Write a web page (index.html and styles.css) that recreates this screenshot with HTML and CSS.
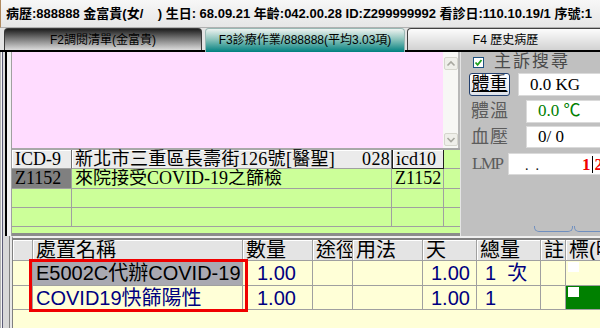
FILE: index.html
```html
<!DOCTYPE html>
<html>
<head>
<meta charset="utf-8">
<link rel="stylesheet" href="styles.css">
</head>
<body>
<div class="app">
  <div class="topbar">病歷:888888 金富貴(女/&nbsp;&nbsp;&nbsp;&nbsp;) 生日: 68.09.21 年齡:042.00.28 ID:Z299999992 看診日:110.10.19/1 序號:1</div>
  <div class="tabs">
    <div class="tab tab-f2">F2調閱清單(金富貴)</div>
    <div class="tab tab-f3">F3診療作業/888888(平均3.03項)</div>
    <div class="tab tab-f4">F4 歷史病歷</div>
  </div>
  <div class="upper">
    <div class="strip"></div>
    <div class="center">
      <div class="memo">
        <div class="memo-text"></div>
        <div class="vscroll">
          <div class="sbtn"><svg width="12" height="11" viewBox="0 0 12 11"><polyline points="2.5,7.5 6,4 9.5,7.5" fill="none" stroke="#a8a8a0" stroke-width="1.6"/></svg></div>
          <div class="sbtn"><svg width="12" height="11" viewBox="0 0 12 11"><polyline points="2.5,4 6,7.5 9.5,4" fill="none" stroke="#a8a8a0" stroke-width="1.6"/></svg></div>
        </div>
      </div>
      <div class="sep"></div>
      <div class="icd">
        <div class="c hd">ICD-9</div>
        <div class="c hd addr"><span class="addr-text">新北市三重區長壽街126號[醫聖]</span><span>028</span></div>
        <div class="c hd focus">icd10</div>
        <div class="c"></div>

        <div class="c code-sel">Z1152</div>
        <div class="c">來院接受COVID-19之篩檢</div>
        <div class="c">Z1152</div>
        <div class="c"></div>

        <div class="c"></div><div class="c"></div><div class="c"></div><div class="c"></div>
        <div class="c"></div><div class="c"></div><div class="c"></div><div class="c"></div>
      </div>
    </div>
    <div class="panel">
      <div class="chk-row">
        <span class="chk"><svg width="11" height="11" viewBox="0 0 11 11"><rect x="0.5" y="0.5" width="10" height="10" fill="#fff" stroke="#1c5180"/><path d="M2.5 5.5 L4.6 7.8 L8.5 3" fill="none" stroke="#21a121" stroke-width="1.8"/></svg></span>
        <span class="chk-label">主訴搜尋</span>
      </div>
      <div class="frow r-weight"><div class="btn"><u>體重</u></div><div class="inp">0.0 KG</div></div>
      <div class="frow r-temp"><span class="lbl">體溫</span><div class="inp green">0.0 ℃</div></div>
      <div class="frow r-bp"><span class="lbl">血壓</span><div class="inp">0/ 0</div></div>
      <div class="frow r-lmp"><span class="lbl lmp">LMP</span><div class="inp inp-lmp"><span class="dots">.&nbsp;&nbsp;.</span><span class="red">1<span class="caret"></span>2</span></div></div>
      <div class="pills"><span class="pill"></span><span class="pill wide"></span></div>
    </div>
  </div>
  <div class="lower">
    <div class="strip strip-low"></div>
    <div class="orders">
      <div class="grid">
        <div class="g gh"></div>
        <div class="g gh">處置名稱</div>
        <div class="g gh">數量</div>
        <div class="g gh">途徑</div>
        <div class="g gh">用法</div>
        <div class="g gh">天</div>
        <div class="g gh">總量</div>
        <div class="g gh">註</div>
        <div class="g gh">標(明</div>

        <div class="g r1"></div>
        <div class="g r1 name sel">E5002C代辦COVID-19:</div>
        <div class="g r1 num qty">1.00</div>
        <div class="g r1"></div>
        <div class="g r1"></div>
        <div class="g r1 num days">1.00</div>
        <div class="g r1 num tot">1&nbsp;&nbsp;次</div>
        <div class="g r1"></div>
        <div class="g r1 mark"><span class="sq"></span></div>

        <div class="g r2"></div>
        <div class="g r2 name">COVID19快篩陽性</div>
        <div class="g r2 num qty">1.00</div>
        <div class="g r2"></div>
        <div class="g r2"></div>
        <div class="g r2 num days">1.00</div>
        <div class="g r2 num tot">1</div>
        <div class="g r2"></div>
        <div class="g r2 mark on"><span class="sq"></span></div>
      </div>
    </div>
    <div class="highlight"></div>
  </div>
</div>
</body>
</html>
```

FILE: styles.css
```css
* { box-sizing: border-box; margin: 0; padding: 0; }
html, body { width: 600px; height: 328px; overflow: hidden; }
body {
  background: #d4d0c8;
  font-family: "Liberation Sans", "Noto Sans CJK TC", sans-serif;
  color: #000;
}
.app { width: 600px; height: 328px; display: flex; flex-direction: column; }

/* top info bar */
.topbar {
  height: 28px;
  flex: none;
  background: linear-gradient(#f7f7f7, #e6e6e6);
  border-bottom: 1px solid #b0b0b0;
  border-left: 1px solid #b08a60;
  padding-left: 5px;
  font-weight: bold;
  font-size: 13px;
  line-height: 28px;
  white-space: nowrap;
  overflow: hidden;
}

/* tabs */
.tabs {
  height: 24px;
  flex: none;
  display: flex;
  align-items: flex-end;
  background: #e4e4e4;
  border-bottom: 2px solid #000;
}
.tab {
  height: 22px;
  flex: none;
  font-size: 12px;
  line-height: 22px;
  text-align: center;
  white-space: nowrap;
  border-radius: 4px 4px 0 0;
}
.tab-f2 {
  margin-left: 4px;
  width: 198px;
  border: 1px solid #3a3a3a;
  border-bottom: none;
  background: linear-gradient(#1e1e1e, #777 45%, #dcdcdc);
}
.tab-f3 {
  margin-left: 3px;
  width: 200px;
  height: 24px;
  margin-bottom: -2px;
  line-height: 22px;
  border: 1px solid #9ab8b4;
  border-bottom: none;
  background: linear-gradient(#eef2f0, #8cc4bc 45%, #008080);
}
.tab-f4 {
  margin-left: 2px;
  width: 197px;
  border: 1px solid #404040;
  border-bottom: none;
  background: linear-gradient(#fcfcfc, #d2d2d2);
}

/* upper region */
.upper { height: 184px; flex: none; display: flex; }
.strip {
  width: 12px;
  flex: none;
  background: linear-gradient(to right, #b4b4b4 0 1px, #f4f4f4 1px 2px, #5c5c78 2px 3px, #dcdcdc 3px 5px, #000 5px 7px, #f2f2f2 7px 11px, #a0a0a0 11px 12px);
}
.center {
  width: 448px;
  flex: none;
  display: flex;
  flex-direction: column;
  border-bottom: 3px solid #8c8c8c;
}
.memo {
  height: 96px;
  flex: none;
  display: flex;
  border-right: 2px solid #b8b8b8;
}
.memo-text { flex: 1; background: #ffdcff; }
.vscroll {
  width: 15px;
  flex: none;
  background: #f7f7f5;
  display: flex;
  flex-direction: column;
  justify-content: space-between;
  padding: 5px 0 2px 1px;
}
.sbtn {
  width: 14px;
  height: 13px;
  background: #efefea;
  border: 1px solid #d6d6ce;
  border-radius: 2px;
  display: flex;
  align-items: center;
  justify-content: center;
}
.sep { height: 2px; flex: none; background: #a8a8a8; }

.icd {
  height: 83px;
  flex: none;
  display: grid;
  grid-template-columns: 60px 320px 52px 16px;
  grid-template-rows: 19px 20px 19px 19px;
  background: #ccff99;
  font-family: "Liberation Serif", "Noto Sans CJK TC", serif;
  font-size: 18px;
}
.c {
  border-right: 1px solid #a0a0a0;
  border-bottom: 1px solid #a0a0a0;
  padding-left: 3px;
  line-height: 19px;
  white-space: nowrap;
  overflow: hidden;
}
.c:nth-child(4n) { border-right: none; }
.hd {
  background: #ebebeb;
  box-shadow: inset 1px 1px 0 #fff;
  border-right-color: #707070;
  line-height: 18px;
  overflow: visible;
}
.addr { display: flex; justify-content: space-between; padding-right: 1px; letter-spacing: 0.3px; }
.focus { border: 1px solid #202020; border-top: none; }
.code-sel { background: #808080; }

/* right panel */
.panel {
  width: 140px;
  flex: none;
  background: #c0c0c0;
  border-left: 1px solid #e4e4e4;
  padding-left: 8px;
  display: flex;
  flex-direction: column;
  overflow: hidden;
}
.chk-row { height: 19px; display: flex; align-items: center; }
.chk { width: 11px; height: 11px; margin-left: 4px; margin-top: 2px; display: flex; }
.chk-label {
  margin-left: 10px;
  font-size: 17px;
  letter-spacing: 2px;
  color: #4a4a4a;
  line-height: 19px;
}
.frow { display: flex; align-items: stretch; height: 23px; }
.r-weight { margin-top: 2px; }
.r-temp { margin-top: 4px; }
.r-bp { margin-top: 3px; height: 22px; }
.r-lmp { margin-top: 5px; height: 22px; }
.btn {
  width: 41px;
  height: 23px;
  flex: none;
  border: 1px solid #23406e;
  border-radius: 3px;
  background: linear-gradient(#ffffff, #dfe3ea);
  font-size: 18px;
  line-height: 20px;
  text-align: center;
  white-space: nowrap;
}
.btn u { text-underline-offset: 1px; }
.lbl {
  width: 49px;
  flex: none;
  padding-left: 2px;
  font-size: 18px;
  letter-spacing: 1px;
  color: #5c5c5c;
  line-height: 22px;
  white-space: nowrap;
}
.lmp {
  width: 39px;
  padding-left: 3px;
  font-family: "Liberation Serif", serif;
  font-size: 17px;
  letter-spacing: -1.5px;
}
.inp {
  width: 90px;
  flex: none;
  margin-left: 8px;
  background: #fff;
  border: 1px solid #dadada;
  font-family: "Liberation Serif", "Noto Sans CJK TC", serif;
  font-size: 17px;
  line-height: 21px;
  padding-left: 11px;
  white-space: nowrap;
}
.r-temp .inp, .r-bp .inp { line-height: 20px; }
.green { color: #008000; }
.inp-lmp {
  width: 96px;
  margin-left: 0;
  display: flex;
  justify-content: space-between;
  padding-left: 16px;
  padding-right: 0;
}
.dots { font-size: 14px; line-height: 24px; }
.red { color: #f00000; font-weight: bold; font-size: 17px; display: flex; align-items: center; }
.caret { width: 1px; height: 17px; background: #000; margin: 0 2px 0 1px; }
.pills { margin-top: auto; margin-bottom: 4px; padding-left: 65px; display: flex; gap: 1px; }
.pill {
  width: 39px;
  height: 6px;
  flex: none;
  border: 1.5px solid #6f8fc0;
  border-top: none;
  border-radius: 0 0 5px 5px;
}
.pill.wide { width: 40px; }

/* lower grid */
.lower { height: 92px; flex: none; display: flex; position: relative; }
.strip-low {
  background: linear-gradient(to right, #b4b4b4 0 1px, #f4f4f4 1px 2px, #5c5c78 2px 3px, #d8d8d8 3px 9px, #808080 9px 10px, #e8e8e8 10px 12px);
}
.orders {
  flex: 1;
  background: #ffffd7;
  border-top: 2px solid #f0f0f0;
  border-left: 1px solid #808080;
  overflow: hidden;
}
.grid {
  display: grid;
  grid-template-columns: 20px 210px 70px 40px 70px 54px 64px 25px 40px;
  grid-template-rows: 21px 25px 24px;
  border-top: 2px solid #808080;
}
.g {
  border-right: 1px solid #a0a0a0;
  border-bottom: 1px solid #a0a0a0;
  white-space: nowrap;
  overflow: hidden;
  font-size: 20px;
  line-height: 24px;
}
.gh {
  background: #e4e4e4;
  box-shadow: inset 1px 1px 0 #fff;
  padding-left: 3px;
  line-height: 21px;
  font-size: 20px;
}
.name { padding-left: 3px; color: #000080; }
.name.sel { background: #a9a9b1; color: #000; }
.num { color: #000080; }
.qty { padding-left: 14px; }
.days { padding-left: 8px; }
.tot { padding-left: 8px; }
.mark { border-right: none; }
.mark.on { background: #008000; }
.sq { display: block; width: 11px; height: 10px; background: #fff; margin: 1px 0 0 2px; }

.highlight {
  position: absolute;
  left: 29px;
  top: 23px;
  width: 219px;
  height: 53px;
  border: 3px solid #f00000;
}
```
